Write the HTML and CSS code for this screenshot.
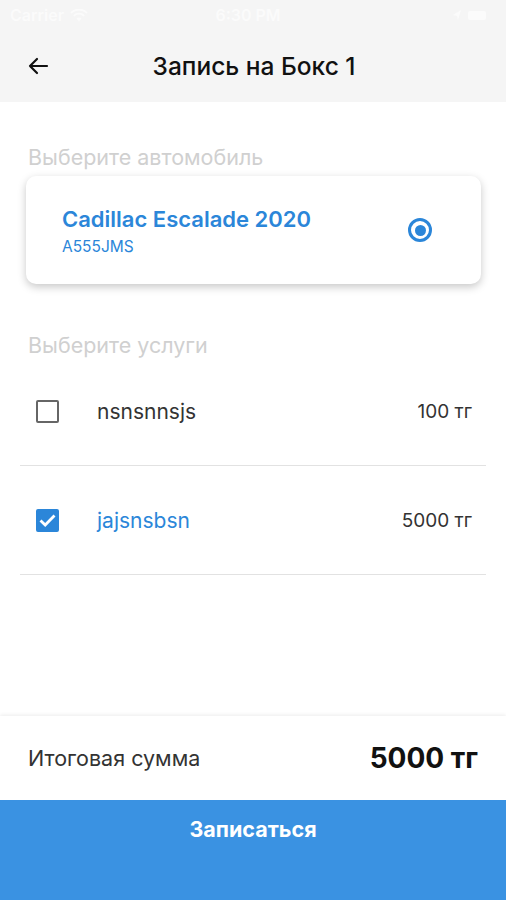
FILE: index.html
```html
<!DOCTYPE html>
<html lang="ru">

<head>
    <meta charset="UTF-8">
    <meta name="viewport" content="width=device-width, initial-scale=1.0">
    <title>Запись на Бокс 1</title>
    <link rel="stylesheet" href="styles.css">
</head>

<body>
    <div class="booking">
        <div class="booking-top">
            <div class="status-bar">
                <div class="status-left">
                    <span>Carrier</span>
                    <svg width="18" height="13" viewBox="0 0 18 13">
                        <path d="M9 12.5 L6.5 9.6 A3.6 3.6 0 0 1 11.5 9.6 Z" fill="#fbfbfb" />
                        <path d="M3.8 6.8 A7.4 7.4 0 0 1 14.2 6.8" stroke="#fbfbfb" stroke-width="1.8" fill="none" />
                        <path d="M1 3.8 A11.4 11.4 0 0 1 17 3.8" stroke="#fbfbfb" stroke-width="1.8" fill="none" />
                    </svg>
                </div>
                <div class="status-time">6:30 PM</div>
                <div class="status-right">
                    <svg width="10" height="12" viewBox="0 0 10 12">
                        <path d="M1 6 L9 1 L6 11 L5 7 Z" fill="#fbfbfb" />
                    </svg>
                    <span class="battery"></span>
                </div>
            </div>
            <div class="booking-header">
                <span class="back-btn">
                    <svg width="24" height="24" viewBox="0 0 24 24">
                        <path d="M21 12H4 M11 5 L4 12 L11 19" stroke="#111" stroke-width="2.2" fill="none" stroke-linecap="round" stroke-linejoin="round" />
                    </svg>
                </span>
                <div class="booking-title">Запись на Бокс 1</div>
            </div>
        </div>

        <div class="booking-body">
            <div class="section-label">Выберите автомобиль</div>
            <div class="car-card">
                <div class="car-info">
                    <div class="car-name">Cadillac Escalade 2020</div>
                    <div class="car-plate">A555JMS</div>
                </div>
                <span class="radio"><span class="radio-dot"></span></span>
            </div>

            <div class="section-label section-label-services">Выберите услуги</div>
            <div class="service-list">
                <div class="service-row">
                    <span class="checkbox"></span>
                    <span class="service-name">nsnsnnsjs</span>
                    <span class="service-price">100 тг</span>
                </div>
                <div class="service-row service-row-active">
                    <span class="checkbox checkbox-checked">
                        <svg width="19" height="19" viewBox="0 0 19 19">
                            <path d="M2.5 9.5 L7.2 14 L16.5 4.6" stroke="#fff" stroke-width="2.8" fill="none" />
                        </svg>
                    </span>
                    <span class="service-name">jajsnsbsn</span>
                    <span class="service-price">5000 тг</span>
                </div>
            </div>
        </div>

        <div class="booking-footer">
            <div class="total-row">
                <span class="total-label">Итоговая сумма</span>
                <span class="total-value">5000 тг</span>
            </div>
            <div class="submit-btn">Записаться</div>
        </div>
    </div>
</body>

</html>
```

FILE: styles.css
```css
body {
    margin: 0;
    background-color: #fff;
    font-family: Inter, "Noto Sans", sans-serif;
    color: #222;
}

.booking {
    display: flex;
    flex-direction: column;
    height: 900px;
    width: 506px;
    overflow: hidden;
}

.booking-top {
    background-color: #f5f5f5;
    height: 102px;
    box-sizing: border-box;
}

.status-bar {
    display: flex;
    align-items: center;
    justify-content: space-between;
    height: 30px;
    padding: 0 20px 0 10px;
    color: #fbfbfb;
    font-size: 16px;
    font-weight: 600;
}

.status-left {
    display: flex;
    align-items: center;
    gap: 6px;
    width: 120px;
}

.status-time {
    flex: 1;
    text-align: center;
}

.status-right {
    display: flex;
    align-items: center;
    justify-content: flex-end;
    gap: 6px;
    width: 120px;
}

.battery {
    display: inline-block;
    width: 18px;
    height: 9px;
    background-color: #fbfbfb;
    border-radius: 2px;
}

.booking-header {
    display: flex;
    align-items: center;
    height: 72px;
    padding: 0 24px 0 26px;
}

.back-btn {
    display: flex;
    width: 30px;
}

.booking-title {
    flex: 1;
    text-align: center;
    font-size: 24.5px;
    font-weight: 500;
    color: #111;
    margin-right: 30px;
}

.booking-body {
    flex: 1;
    padding: 42px 20px 0;
}

.section-label {
    color: #d0d0d0;
    font-size: 21.5px;
    padding-left: 8px;
    line-height: 26px;
}

.car-card {
    display: flex;
    align-items: center;
    margin: 6px 5px 0 6px;
    height: 108px;
    padding: 0 49px 0 36px;
    background-color: #fff;
    border-radius: 10px;
    box-shadow: 0 3px 8px rgba(0, 0, 0, 0.22);
}

.car-info {
    flex: 1;
    padding-top: 2px;
}

.car-name {
    color: #2b86d9;
    font-size: 22px;
    font-weight: 600;
    line-height: 26px;
}

.car-plate {
    color: #2b86d9;
    font-size: 15.5px;
    line-height: 18px;
    margin-top: 6px;
}

.radio {
    display: flex;
    align-items: center;
    justify-content: center;
    width: 18px;
    height: 18px;
    border: 3px solid #2b86d9;
    border-radius: 50%;
}

.radio-dot {
    width: 11px;
    height: 11px;
    border-radius: 50%;
    background-color: #2b86d9;
}

.section-label-services {
    margin-top: 48px;
}

.service-list {
    margin-top: -1px;
}

.service-row {
    display: flex;
    align-items: center;
    height: 108px;
    padding: 0 14px 0 16px;
    border-bottom: 1px solid #e2e2e2;
}

.checkbox {
    display: flex;
    align-items: center;
    justify-content: center;
    width: 19px;
    height: 19px;
    border: 2px solid #666;
    border-radius: 2px;
}

.checkbox-checked {
    background-color: #2b86d9;
    border-color: #2b86d9;
}

.service-name {
    flex: 1;
    margin-left: 38px;
    font-size: 21px;
    color: #333;
}

.service-row-active .service-name {
    color: #2b86d9;
}

.service-price {
    font-size: 19px;
    color: #333;
}

.booking-footer {
    box-shadow: 0 -1px 4px rgba(0, 0, 0, 0.08);
}

.total-row {
    display: flex;
    align-items: center;
    justify-content: space-between;
    height: 84px;
    padding: 0 28px;
}

.total-label {
    font-size: 21.5px;
    color: #333;
}

.total-value {
    font-size: 28px;
    font-weight: 700;
    color: #111;
}

.submit-btn {
    height: 100px;
    box-sizing: border-box;
    padding-top: 16px;
    background-color: #3a92e2;
    color: #fff;
    text-align: center;
    font-size: 21.5px;
    font-weight: 700;
}
```
